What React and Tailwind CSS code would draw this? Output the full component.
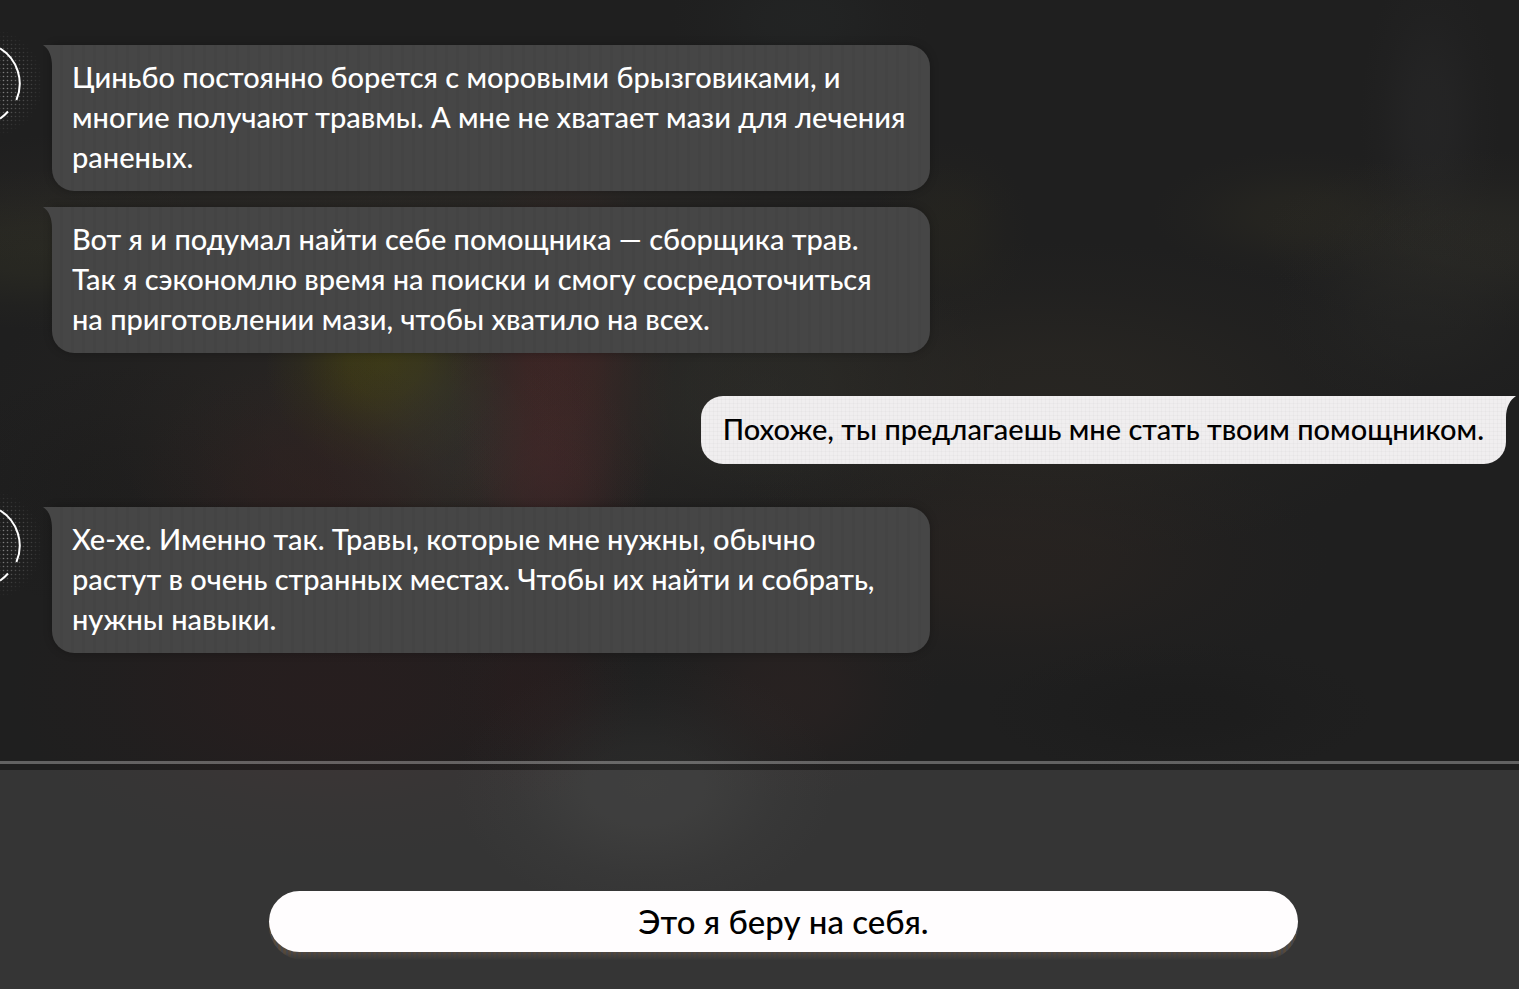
const dialog = [
  {
    from: "npc",
    messages: [
      "Циньбо постоянно борется с моровыми брызговиками, и\nмногие получают травмы. А мне не хватает мази для лечения\nраненых.",
      "Вот я и подумал найти себе помощника — сборщика трав.\nТак я сэкономлю время на поиски и смогу сосредоточиться\nна приготовлении мази, чтобы хватило на всех.",
    ],
  },
  {
    from: "player",
    messages: ["Похоже, ты предлагаешь мне стать твоим помощником."],
  },
  {
    from: "npc",
    messages: [
      "Хе-хе. Именно так. Травы, которые мне нужны, обычно\nрастут в очень странных местах. Чтобы их найти и собрать,\nнужны навыки.",
    ],
  },
];

// Soft colour spots behind the chat
const spots = [
  { x: 40, y: 250, rx: 200, ry: 80, color: "#3a3a28", o: 0.35 },
  { x: 130, y: 490, rx: 200, ry: 130, color: "#161616", o: 0.3 },
  { x: 400, y: 200, rx: 620, ry: 80, color: "#34302a", o: 0.45 },
  { x: 400, y: 430, rx: 420, ry: 240, color: "#302a26", o: 0.6 },
  { x: 385, y: 365, rx: 120, ry: 110, color: "#46420f", o: 0.7 },
  { x: 450, y: 430, rx: 140, ry: 140, color: "#363630", o: 0.5 },
  { x: 320, y: 490, rx: 190, ry: 130, color: "#341e1e", o: 0.4 },
  { x: 562, y: 360, rx: 115, ry: 200, color: "#4c2626", o: 0.6 },
  { x: 550, y: 480, rx: 100, ry: 110, color: "#46282a", o: 0.5 },
  { x: 760, y: 390, rx: 240, ry: 150, color: "#30302b", o: 0.6 },
  { x: 1050, y: 400, rx: 380, ry: 160, color: "#302c25", o: 0.5 },
  { x: 1010, y: 560, rx: 320, ry: 130, color: "#302722", o: 0.45 },
  { x: 950, y: 230, rx: 80, ry: 90, color: "#2c2a20", o: 0.4 },
  { x: 1430, y: 120, rx: 70, ry: 160, color: "#2a2a2b", o: 0.5 },
  { x: 1300, y: 215, rx: 150, ry: 65, color: "#2e2c22", o: 0.45 },
  { x: 1480, y: 240, rx: 220, ry: 90, color: "#302f28", o: 0.5 },
  { x: 1420, y: 310, rx: 150, ry: 110, color: "#2a2a27", o: 0.4 },
  { x: 330, y: 690, rx: 320, ry: 170, color: "#2e1d1e", o: 0.5 },
  { x: 540, y: 690, rx: 100, ry: 110, color: "#2e1c1d", o: 0.4 },
  { x: 790, y: 690, rx: 150, ry: 110, color: "#302423", o: 0.5 },
  { x: 645, y: 785, rx: 190, ry: 130, color: "#3a3a39", o: 0.4 },
  { x: 800, y: 20, rx: 130, ry: 80, color: "#282c2c", o: 0.35 },
  { x: 1180, y: 710, rx: 200, ry: 70, color: "#191919", o: 0.4 },
];

function Backdrop() {
  return (
    <svg
      className="absolute inset-0 h-full w-full"
      viewBox="0 0 1519 989"
      preserveAspectRatio="none"
      aria-hidden="true"
    >
      <defs>
        {spots.map((s, i) => (
          <radialGradient key={i} id={`spot-${i}`}>
            <stop offset="0" stopColor={s.color} stopOpacity={s.o} />
            <stop offset="0.3" stopColor={s.color} stopOpacity={s.o * 0.85} />
            <stop offset="0.7" stopColor={s.color} stopOpacity={s.o * 0.25} />
            <stop offset="1" stopColor={s.color} stopOpacity="0" />
          </radialGradient>
        ))}
      </defs>
      {spots.map((s, i) => (
        <ellipse key={i} cx={s.x} cy={s.y} rx={s.rx} ry={s.ry} fill={`url(#spot-${i})`} />
      ))}
    </svg>
  );
}

// Right edge of the round portrait with its halftone glow
function Avatar() {
  return (
    <svg
      className="absolute -top-7 left-0"
      width="48"
      height="136"
      viewBox="0 0 48 136"
      fill="none"
      aria-hidden="true"
    >
      <defs>
        <pattern id="dots" x="1" y="1" width="4" height="4" patternUnits="userSpaceOnUse">
          <circle cx="2.5" cy="2.5" r="0.8" fill="#a0a0a0" />
        </pattern>
        <radialGradient id="glow" gradientUnits="userSpaceOnUse" cx="-12" cy="66" r="56">
          <stop offset="0" stopColor="#fff" stopOpacity="0.8" />
          <stop offset="0.4" stopColor="#fff" stopOpacity="0.7" />
          <stop offset="1" stopColor="#fff" stopOpacity="0" />
        </radialGradient>
        <mask id="fade">
          <rect width="48" height="136" fill="url(#glow)" />
        </mask>
      </defs>
      <rect width="48" height="136" fill="url(#dots)" mask="url(#fade)" />
      <path
        d="M0 31.4A41.5 41.5 0 0 1 16.4 83M8 94.5A41.5 41.5 0 0 1 0 101.6"
        stroke="#fff"
        strokeWidth="2"
      />
    </svg>
  );
}

function NpcBubble({ children }) {
  return (
    <div className="relative w-full max-w-[878px] rounded-[22px] rounded-tl-none bg-[#464646] bg-[repeating-linear-gradient(90deg,#464646_0_8px,#444444_8px_11px)] px-5 pt-3 pb-[14px] text-white shadow-[0_0_8px_rgba(0,0,0,0.25)]">
      <svg
        className="absolute -left-[9px] top-0"
        width="9"
        height="22"
        viewBox="0 0 9 22"
        aria-hidden="true"
      >
        <path d="M0 0H9V22C9 11 6 4 0 0Z" fill="#464646" />
      </svg>
      <p className="whitespace-pre">{children}</p>
    </div>
  );
}

function PlayerBubble({ children }) {
  return (
    <div className="relative rounded-[22px] rounded-tr-none bg-[#f0eeef] bg-[repeating-linear-gradient(90deg,rgba(0,0,0,0.02)_0_1px,transparent_1px_4px),repeating-linear-gradient(0deg,rgba(0,0,0,0.02)_0_1px,transparent_1px_4px)] px-[22px] pt-[13px] pb-[15px] text-black">
      <svg
        className="absolute -right-[10px] top-0"
        width="10"
        height="22"
        viewBox="0 0 10 22"
        aria-hidden="true"
      >
        <path d="M10 0H0V22C0 11 4 4 10 0Z" fill="#f0eeef" />
      </svg>
      <p className="whitespace-pre">{children}</p>
    </div>
  );
}

export default function App() {
  return (
    <div className="relative flex min-h-screen flex-col overflow-hidden bg-[#1f1f1f] font-['Lato','Noto_Sans',sans-serif] text-[29px] font-medium leading-10">
      <Backdrop />

      <main className="relative flex flex-1 flex-col gap-[43px] pt-[45px]">
        {dialog.map((group, idx) =>
          group.from === "npc" ? (
            <div key={idx} className="relative flex flex-col gap-4 pl-[52px]">
              <Avatar />
              {group.messages.map((text) => (
                <NpcBubble key={text}>{text}</NpcBubble>
              ))}
            </div>
          ) : (
            <div key={idx} className="flex flex-col items-end gap-4 pr-[13px]">
              {group.messages.map((text) => (
                <PlayerBubble key={text}>{text}</PlayerBubble>
              ))}
            </div>
          )
        )}
      </main>

      {/* Divider */}
      <div className="relative mb-1.5 h-[3px] bg-white/30" />

      {/* Answer options */}
      <footer className="relative flex justify-center bg-white/10 pt-[121px] pb-[29px] pl-12">
        <div className="w-[70%] rounded-[34px] bg-[linear-gradient(0deg,#363636_0,transparent_8px),repeating-linear-gradient(90deg,#564a3a_0_2px,#46484c_2px_4px,#54463e_4px_5px)] pb-2">
          <button
            type="button"
            className="block h-[61px] w-full cursor-pointer rounded-full bg-[#fffdfe] pb-0.5 text-[33px] text-black"
          >
            Это я беру на себя.
          </button>
        </div>
      </footer>
    </div>
  );
}
